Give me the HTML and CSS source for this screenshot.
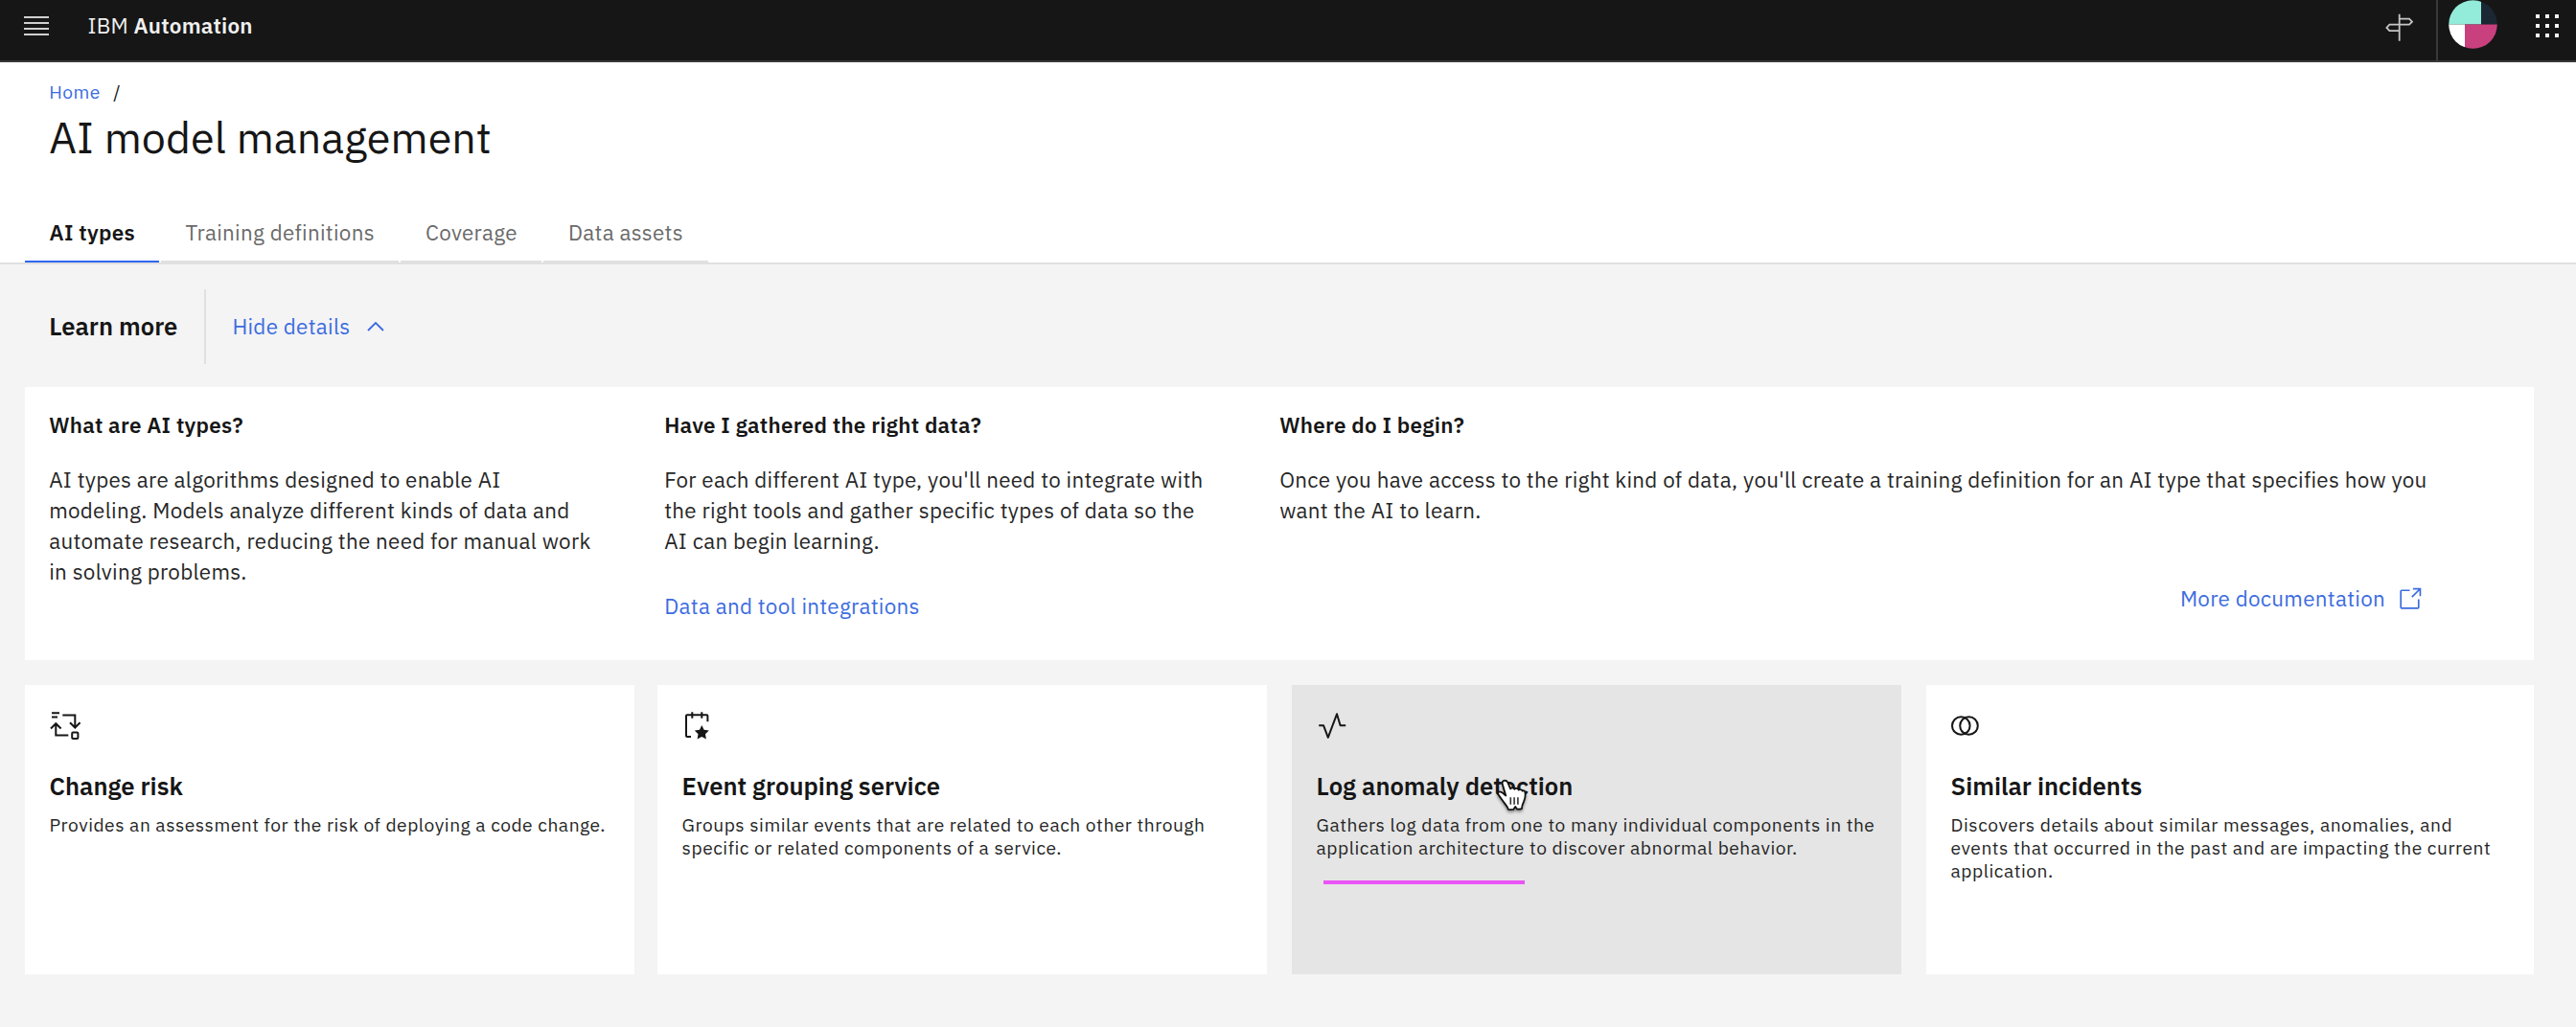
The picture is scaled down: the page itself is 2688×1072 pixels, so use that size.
FILE: index.html
```
<!DOCTYPE html>
<html lang="en">
<head>
<meta charset="utf-8">
<title>AI model management</title>
<link rel="stylesheet" href="styles.css">
</head>
<body>
<header class="topbar">
  <button class="menu" aria-label="Menu">
    <svg width="26" height="22" viewBox="0 0 26 22"><path d="M0 2H26M0 8H26M0 14H26M0 20H26" stroke="#d0d0d0" stroke-width="2"/></svg>
  </button>
  <div class="brand">IBM&nbsp;<b>Automation</b></div>
  <div class="tour">
    <svg width="32" height="32" viewBox="0 0 32 32" fill="none" stroke="#c6c6c6" stroke-width="1.8"><path d="M15.7 1.7V29.8M15.7 6.7H26l3 3-3 3H5.4l-3 3.2 3 3.2H15.7"/></svg>
  </div>
  <div class="account">
    <svg width="51" height="51" viewBox="0 0 51 51">
      <clipPath id="disc"><circle cx="25.5" cy="25.5" r="25.3"/></clipPath>
      <g clip-path="url(#disc)">
        <path fill="#93ebda" d="M0 0h34v25.5H0z"/>
        <path fill="#1b2733" d="M34 0h17v25.5H34z"/>
        <path fill="#fff" d="M0 25.5h17V51H0z"/>
        <path fill="#c9407f" d="M17 25.5h34V51H17z"/>
      </g>
    </svg>
  </div>
  <div class="switcher">
    <svg width="24" height="24" viewBox="0 0 24 24" fill="#f4f4f4"><path d="M0 0h4v4H0zM10 0h4v4h-4zM20 0h4v4h-4zM0 10h4v4H0zM10 10h4v4h-4zM20 10h4v4h-4zM0 20h4v4H0zM10 20h4v4h-4zM20 20h4v4h-4z"/></svg>
  </div>
</header>

<section class="page-head">
  <nav class="crumbs"><a>Home</a><span>/</span></nav>
  <h1>AI model management</h1>
  <nav class="tabs">
    <a class="tab active">AI types</a>
    <a class="tab">Training definitions</a>
    <a class="tab">Coverage</a>
    <a class="tab">Data assets</a>
  </nav>
</section>

<main>
  <div class="learn">
    <h2>Learn more</h2>
    <a class="toggle">Hide details
      <svg width="18" height="10" viewBox="0 0 18 10" fill="none" stroke="currentColor" stroke-width="1.8"><path d="M1 9l8-8 8 8"/></svg>
    </a>
  </div>

  <section class="details">
    <article>
      <h3>What are AI types?</h3>
      <p>AI types are algorithms designed to enable AI<br>modeling. Models analyze different kinds of data and<br>automate research, reducing the need for manual work<br>in solving problems.</p>
    </article>
    <article>
      <h3>Have I gathered the right data?</h3>
      <p>For each different AI type, you'll need to integrate with<br>the right tools and gather specific types of data so the<br>AI can begin learning.</p>
      <a class="link">Data and tool integrations</a>
    </article>
    <article>
      <h3>Where do I begin?</h3>
      <p>Once you have access to the right kind of data, you'll create a training definition for an AI type that specifies how you<br>want the AI to learn.</p>
      <a class="link docs">More documentation
        <svg width="27" height="27" viewBox="0 0 32 32" fill="currentColor"><path d="M26 28H6a2 2 0 0 1-2-2V6a2 2 0 0 1 2-2h10v2H6v20h20V16h2v10a2 2 0 0 1-2 2z"/><path d="M20 2v2h6.590L18 12.590 19.410 14 28 5.410V12h2V2z"/></svg>
      </a>
    </article>
  </section>

  <section class="cards">
    <article class="card">
      <svg class="icon" viewBox="0 0 32 32"><path d="M2 3.300h8M2 7.500h6M13.300 5.500h13v13M21 13.200l5.300 5.300 5.300-5.300M19.300 26.500h-13V14.200M1 19.500l5.300-5.300 5.300 5.300"/><rect x="23.200" y="23.500" width="6.200" height="6.400" rx="1"/></svg>
      <h3>Change risk</h3>
      <p>Provides an assessment for the risk of deploying a code change.</p>
    </article>
    <article class="card">
      <svg class="icon" viewBox="0 0 32 32"><path d="M9 28H5a1 1 0 0 1-1-1V6.300a1 1 0 0 1 1-1h20.400a1 1 0 0 1 1 1V12.300M10.300 2.300v6.400M20.300 2.300v6.400"/><path class="solid" d="M20.300 16l2.300 4.800 5.200.8-3.800 3.700.9 5.300-4.600-2.500-4.700 2.500.9-5.300-3.700-3.700 5.200-.8z"/></svg>
      <h3>Event grouping service</h3>
      <p>Groups similar events that are related to each other through<br>specific or related components of a service.</p>
    </article>
    <article class="card hovered">
      <svg class="icon" viewBox="0 0 32 32"><path stroke-linejoin="round" d="M2.200 16.300h4.900l4.700 12.500L21 4.300l3.600 12h5.600"/></svg>
      <h3>Log anomaly detection</h3>
      <p>Gathers log data from one to many individual components in the<br>application architecture to discover abnormal behavior.</p>
      <span class="marker"></span>
      <svg class="pointer" width="33" height="37" viewBox="0 0 33 37"><path fill="#fff" stroke="#111" stroke-width="1.8" stroke-linejoin="round" d="M10.300 17.500L6.900 6C6 2.800 7.300 1.700 9.200 1.600c1.800 0 2.700 1 3.400 2.800l2.500 6c.5-1.600 3.600-1.500 4.200.4.800-1.400 3.700-1.100 4.300.8 1-1 3.300-.5 4 1 1.300-.9 2.900 0 2.900 2.200.5 3.200-.1 5.500-1.400 8.500-1.300 2.700-2 4.300-2.200 7.900-1.700.5-3.200.6-4.900.4l-1.800-2.600-2 2.900c-1.800.2-3.700.2-5.400 0-.5-3-2.400-4.300-4.700-7.600-1.600-2.500-4-5.200-5.700-8-.8-1.700 0-2.900 1.600-2.900 1.700 0 3.300 1.600 6.300 4.100z"/><path stroke="#333" stroke-width="1.6" d="M15.300 19.300v7.400M19.100 19.300v7.400M22.900 19.300v7.400"/></svg>
    </article>
    <article class="card last">
      <svg class="icon" viewBox="0 0 32 32"><circle cx="10.300" cy="16.500" r="9.300"/><circle cx="18.500" cy="16.500" r="9.300"/></svg>
      <h3>Similar incidents</h3>
      <p>Discovers details about similar messages, anomalies, and<br>events that occurred in the past and are impacting the current<br>application.</p>
    </article>
  </section>
</main>
</body>
</html>
```
FILE: styles.css
```
* { box-sizing: border-box; }

body {
  margin: 0;
  min-height: 1072px;
  background: #f4f4f4;
  color: #161616;
  font: 400 22.4px/32px "IBM Plex Sans", Roboto, "Noto Sans", sans-serif;
  letter-spacing: 0.285px;
  white-space: nowrap;
}

h1, h2, h3, p { margin: 0; }
svg { display: block; flex: none; }

/* Top bar */
.topbar {
  display: flex;
  height: 65px;
  padding-right: 18px;
  background: #161616;
  border-bottom: 2px solid #393939;
  color: #f0f0f0;
}
.topbar > * {
  display: flex;
  align-items: center;
  padding: 0 0 10px;
}
.topbar .menu { margin: 0 40.5px 0 0; padding-left: 25px; border: 0; background: none; }
.brand { letter-spacing: 0.25px; }
.brand b { font-weight: 600; }
.topbar .tour { margin-left: auto; padding: 4px 22px 10px 0; }
.topbar .account { padding: 0 40px 12px 11px; border-left: 2px solid #393939; }

/* Title and tabs */
.page-head {
  height: 211px;
  padding: 19px 0 0 51.2px;
  background: #fff;
  border-bottom: 2px solid #e0e0e0;
}
.crumbs {
  display: flex;
  gap: 13.5px;
  font-size: 19.2px;
  line-height: 24px;
  letter-spacing: 0.512px;
}
.crumbs a, .toggle, .link { color: #3c6ce0; }
h1 {
  margin-top: 7px;
  font-size: 44.8px;
  font-weight: 400;
  line-height: 56px;
  letter-spacing: 0.08px;
}
.tabs { display: flex; gap: 2px; margin: 56px 0 0 -25.2px; }
.tab {
  padding: 0 25.6px 13px;
  border-bottom: 2px solid #e0e0e0;
  color: #6a6a6a;
}
.tab.active { padding-right: 25px; color: #161616; font-weight: 600; border-color: #2f67f0; }

/* Learn more row */
.learn { display: flex; align-items: center; height: 78px; margin: 26px 0 24px 51.2px; }
.learn h2 {
  width: 163.8px;
  border-right: 2px solid #e0e0e0;
  font-size: 25.6px;
  font-weight: 600;
  line-height: 78px;
  letter-spacing: 0;
}
.toggle { display: flex; align-items: center; gap: 17.5px; padding: 0 0 1px 27.4px; }

/* Explanations */
.details {
  display: grid;
  grid-template-columns: 642px 642px 1fr;
  height: 285px;
  margin: 0 44px 26.3px 26px;
  padding: 24px 0 0 25.2px;
  background: #fff;
}
.details h3 { margin-bottom: 24.5px; font-size: 22.4px; font-weight: 600; line-height: 32px; }
.details p { color: #262626; }
.link { display: block; margin-top: 36px; }
.docs { display: flex; align-items: center; justify-content: flex-end; gap: 12px; margin: 60.5px 116px 0 0; }

/* AI type cards */
.cards {
  display: grid;
  grid-template-columns: 660px 662px 662px 634px;
  margin-left: 26px;
}
.card { position: relative; width: 636px; height: 301.4px; padding: 25.6px; background: #fff; }
.card.last { width: 634px; }
.card.hovered { background: #e5e5e5; }
.card h3 { margin: 31.8px 0 12px; font-size: 25.6px; font-weight: 600; line-height: 32px; letter-spacing: 0; }
.card p { color: #262626; font-size: 19.2px; line-height: 24.3px; letter-spacing: 0.53px; }
.icon { width: 32px; height: 32px; fill: none; stroke: #161616; stroke-width: 2; }
.icon .solid { fill: #161616; stroke: none; }
.marker { position: absolute; left: 33px; top: 203.7px; width: 210px; height: 4px; background: #ea55f5; }
.pointer { position: absolute; left: 213px; top: 98px; filter: drop-shadow(0 2px 1.5px rgba(0, 0, 0, 0.4)); }
```
